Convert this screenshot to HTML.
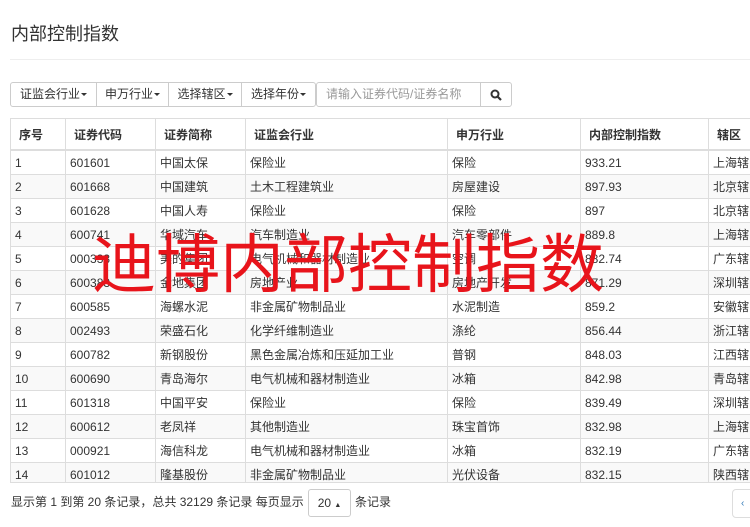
<!DOCTYPE html><html><head><meta charset="utf-8"><style>
body{margin:0;width:750px;height:527px;overflow:hidden;background:#fff;font-family:"Liberation Sans","Noto Sans CJK SC",sans-serif;font-size:12px;color:#333;position:relative}
.t{position:absolute;left:11px;top:20px;font-size:18px;color:#333}
.hr{position:absolute;left:10px;right:0;top:59px;border-top:1px solid #eee}
.tb{position:absolute;top:82px;height:25px;border:1px solid #ccc;box-sizing:border-box;line-height:23px;text-align:center;background:#fff}
.car{display:inline-block;border-top:3px solid #333;border-left:3px solid transparent;border-right:3px solid transparent;vertical-align:middle;margin-left:1px}
.wrap{position:absolute;left:10px;top:118px;width:760px;height:364px;overflow:hidden;border-bottom:1px solid #ddd}
table{border-collapse:collapse;table-layout:fixed;width:760px}
td,th{border:1px solid #ddd;padding:0 0 0 4px;height:23px;text-align:left;white-space:nowrap;overflow:hidden}
th{height:30px;font-weight:bold;padding-left:8px;border-bottom:2px solid #ddd}
tr:nth-child(odd) td{background:#f9f9f9}
.wm{position:absolute;left:92px;top:220px;font-size:64px;color:#e8141b;font-family:"Noto Sans CJK SC",sans-serif;line-height:80px}
.ft{position:absolute;left:11px;top:493px}
.sel{position:absolute;left:308px;top:489px;width:43px;height:28px;border:1px solid #ccc;border-radius:3px;box-sizing:border-box;line-height:26px;text-align:center}
</style></head><body>
<div class="t">内部控制指数</div><div class="hr"></div>
<div class="tb" style="left:10px;width:87px;border-radius:3px 0 0 3px">证监会行业<span class="car"></span></div>
<div class="tb" style="left:96px;width:73px">申万行业<span class="car"></span></div>
<div class="tb" style="left:168px;width:74px">选择辖区<span class="car"></span></div>
<div class="tb" style="left:241px;width:75px;border-radius:0 3px 3px 0">选择年份<span class="car"></span></div>
<div class="tb" style="left:316px;width:165px;text-align:left;padding-left:9px;color:#999;border-radius:3px 0 0 3px">请输入证券代码/证券名称</div>
<div class="tb" style="left:480px;width:32px;border-radius:0 3px 3px 0"><svg width="12" height="12" viewBox="0 0 12 12" style="vertical-align:middle"><circle cx="5" cy="5" r="3.5" fill="none" stroke="#333" stroke-width="2"/><path d="M7.5 7.5L11 11" stroke="#333" stroke-width="2.2"/></svg></div>
<div class="wrap"><table>
<colgroup><col style="width:55px"><col style="width:90px"><col style="width:90px"><col style="width:202px"><col style="width:133px"><col style="width:128px"><col style="width:62px"></colgroup>
<tr><th>序号</th><th>证券代码</th><th>证券简称</th><th>证监会行业</th><th>申万行业</th><th>内部控制指数</th><th>辖区</th></tr>
<tr><td>1</td><td>601601</td><td>中国太保</td><td>保险业</td><td>保险</td><td>933.21</td><td>上海辖区</td></tr>
<tr><td>2</td><td>601668</td><td>中国建筑</td><td>土木工程建筑业</td><td>房屋建设</td><td>897.93</td><td>北京辖区</td></tr>
<tr><td>3</td><td>601628</td><td>中国人寿</td><td>保险业</td><td>保险</td><td>897</td><td>北京辖区</td></tr>
<tr><td>4</td><td>600741</td><td>华域汽车</td><td>汽车制造业</td><td>汽车零部件</td><td>889.8</td><td>上海辖区</td></tr>
<tr><td>5</td><td>000333</td><td>美的集团</td><td>电气机械和器材制造业</td><td>空调</td><td>882.74</td><td>广东辖区</td></tr>
<tr><td>6</td><td>600383</td><td>金地集团</td><td>房地产业</td><td>房地产开发</td><td>871.29</td><td>深圳辖区</td></tr>
<tr><td>7</td><td>600585</td><td>海螺水泥</td><td>非金属矿物制品业</td><td>水泥制造</td><td>859.2</td><td>安徽辖区</td></tr>
<tr><td>8</td><td>002493</td><td>荣盛石化</td><td>化学纤维制造业</td><td>涤纶</td><td>856.44</td><td>浙江辖区</td></tr>
<tr><td>9</td><td>600782</td><td>新钢股份</td><td>黑色金属冶炼和压延加工业</td><td>普钢</td><td>848.03</td><td>江西辖区</td></tr>
<tr><td>10</td><td>600690</td><td>青岛海尔</td><td>电气机械和器材制造业</td><td>冰箱</td><td>842.98</td><td>青岛辖区</td></tr>
<tr><td>11</td><td>601318</td><td>中国平安</td><td>保险业</td><td>保险</td><td>839.49</td><td>深圳辖区</td></tr>
<tr><td>12</td><td>600612</td><td>老凤祥</td><td>其他制造业</td><td>珠宝首饰</td><td>832.98</td><td>上海辖区</td></tr>
<tr><td>13</td><td>000921</td><td>海信科龙</td><td>电气机械和器材制造业</td><td>冰箱</td><td>832.19</td><td>广东辖区</td></tr>
<tr><td>14</td><td>601012</td><td>隆基股份</td><td>非金属矿物制品业</td><td>光伏设备</td><td>832.15</td><td>陕西辖区</td></tr>
</table></div>
<div class="wm">迪博内部控制指数</div>
<div class="ft">显示第 1 到第 20 条记录，总共 32129 条记录 每页显示</div>
<div class="sel">20 <span style="font-size:7px">▲</span></div>
<div style="position:absolute;left:355px;top:493px">条记录</div>
<div style="position:absolute;left:732px;top:489px;width:30px;height:29px;border:1px solid #ddd;border-radius:4px;box-sizing:border-box;line-height:27px;padding-left:8px;font-size:10px;color:#337ab7">‹</div>
</body></html>
